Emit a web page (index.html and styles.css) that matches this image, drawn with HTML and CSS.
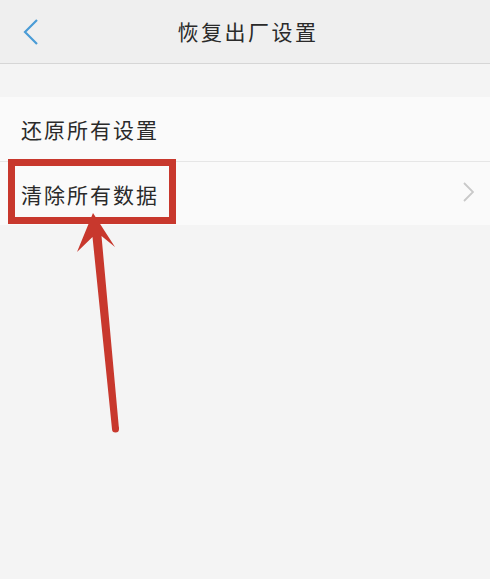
FILE: index.html
```html
<!DOCTYPE html>
<html lang="zh">
<head>
<meta charset="utf-8">
<link rel="stylesheet" href="styles.css">
</head>
<body>
<div class="screen">
  <header class="topbar">
    <span class="back">
      <svg width="16" height="26" viewBox="0 0 16 26"><polyline points="14,1 2,13 14,25" fill="none" stroke="#4a9cd6" stroke-width="2.2" stroke-linejoin="miter"/></svg>
    </span>
    <h1 class="title">恢复出厂设置</h1>
  </header>
  <div class="spacer"></div>
  <ul class="list">
    <li class="item">还原所有设置</li>
    <li class="item">清除所有数据
      <svg class="chev" width="11" height="20" viewBox="0 0 11 20"><polyline points="1,1 10,10 1,19" fill="none" stroke="#c9c9c9" stroke-width="1.8"/></svg>
    </li>
  </ul>
  <div class="highlight"></div>
  <svg class="arrow" width="490" height="579" viewBox="0 0 490 579">
    <polygon points="93,213 115,247 101.5,236 119,429 112,429 92.5,237 77,252" fill="#c8382d"/>
    <circle cx="115.5" cy="429" r="3.5" fill="#c8382d"/>
  </svg>
</div>
</body>
</html>
```
FILE: styles.css
```css
* { box-sizing: border-box; margin: 0; padding: 0; }
html, body { width: 490px; height: 579px; overflow: hidden; }
body {
  background: #f4f4f4;
  font-family: "Noto Sans CJK SC", "Noto Sans", sans-serif;
  color: #2b2b2b;
}
.screen { position: relative; width: 490px; height: 579px; }
.topbar {
  height: 64px;
  background: #efefef;
  border-bottom: 1px solid #d6d6d6;
  display: flex;
  align-items: center;
  justify-content: center;
  position: relative;
}
.back {
  position: absolute;
  left: 23px;
  top: 19px;
  display: flex;
}
.title {
  font-size: 21px;
  font-weight: 400;
  letter-spacing: 2.5px;
  color: #2a2a2a;
  margin-left: 6px;
  margin-top: -1px;
}
.spacer { height: 33px; }
.list { list-style: none; background: #fafafa; }
.item {
  height: 64px;
  display: flex;
  align-items: center;
  justify-content: space-between;
  padding: 0 16px 0 21px;
  font-size: 21px;
  letter-spacing: 2px;
  color: #2a2a2a;
}
.item + .item { border-top: 1px solid #e6e6e6; }
.chev { margin-right: 0; margin-top: -4px; }
.highlight {
  position: absolute;
  left: 8px;
  top: 159px;
  width: 168px;
  height: 65px;
  border: 7px solid #c8382d;
}
.arrow { position: absolute; left: 0; top: 0; }
```
